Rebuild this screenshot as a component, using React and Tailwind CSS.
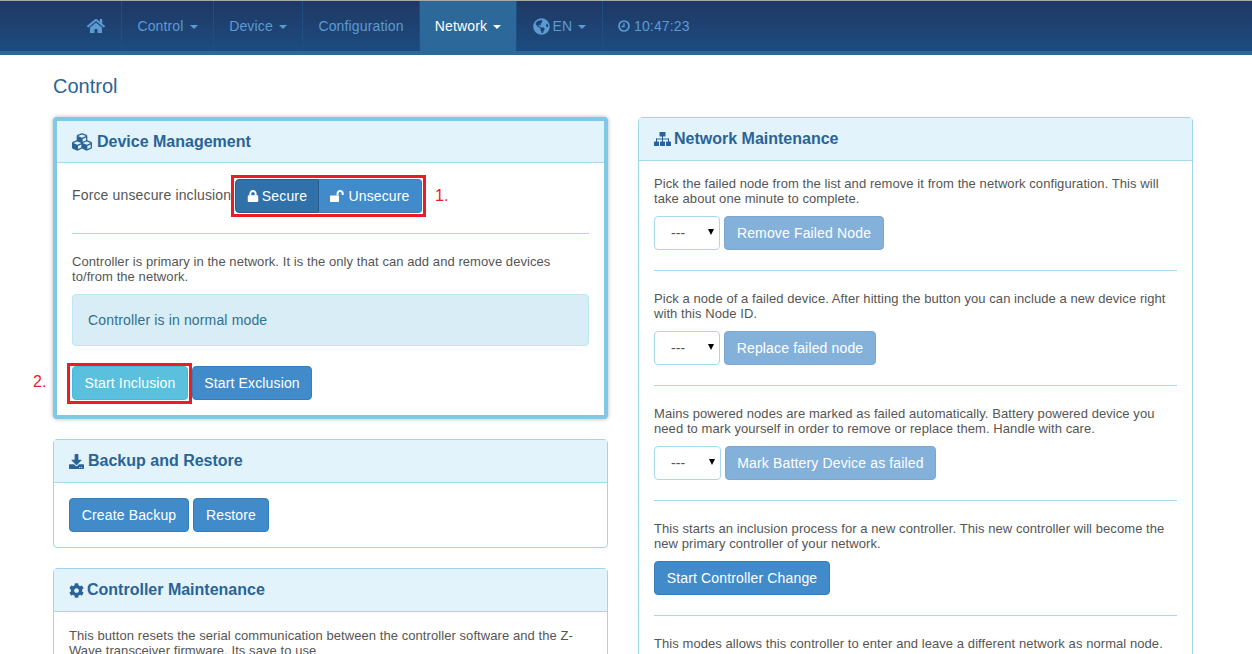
import React from "react";
import { FaHome, FaCubes, FaDownload, FaCog, FaLock, FaGlobeAmericas } from "react-icons/fa";

const Caret = () => <span className="inline-block ml-[2px] align-middle w-0 h-0 border-x-4 border-x-transparent border-t-4 border-t-current" />;

const NavItem = ({ className = "", children, active }) => (
  <div className={`h-full flex items-center justify-center border-r border-[#1f4f80] text-[14px] ${active ? "bg-[#2c6899] text-white" : "text-[#5b9bd1]"} ${className}`}>
    {children}
  </div>
);

const Btn = ({ className = "", children, disabled }) => (
  <div className={`h-[34px] flex items-center justify-center rounded border text-[14px] text-white ${disabled ? "bg-[#84b1da] border-[#7aa8d2]" : "bg-[#428bca] border-[#357ebd]"} ${className}`}>{children}</div>
);

const Panel = ({ icon, title, gap = "gap-[4px]", className = "", children }) => (
  <section className={`bg-white border border-[#9fd6ec] rounded ${className}`}>
    <header className={`h-[43px] px-[15px] flex items-center bg-[#e2f3fb] border-b border-[#a6d9ee] text-[#2a6496] text-[16px] font-bold tracking-normal ${gap}`}>
      {icon}<span>{title}</span>
    </header>
    {children}
  </section>
);

const Select = ({ w }) => (
  <div className={`h-[34px] ${w} rounded border border-[#a6d9ee] flex items-center text-[14px] text-[#555] relative pl-[16px]`}>
    ---
    <span className="absolute right-[5px] top-[12px] w-0 h-0 border-x-[3.5px] border-x-transparent border-t-[6px] border-t-black" />
  </div>
);

const Section = ({ text, children, first, last }) => (
  <div className={`${first ? "pt-[15px]" : "pt-[20px]"} pb-[20px] ${last ? "" : "border-b border-[#a6d9ee]"}`}>
    <p className="text-[13px] leading-[15px] tracking-[0.07px] text-[#555] mb-[10px]">{text}</p>
    <div className="flex gap-[4px]">{children}</div>
  </div>
);

const UnlockIcon = () => (
  <svg width="14" height="12" viewBox="0 0 14 12" fill="currentColor" aria-hidden="true">
    <path d="M1 5.5h7.2c.5 0 .8.3.8.8v4.9c0 .5-.3.8-.8.8H.8c-.5 0-.8-.3-.8-.8V6.500c0-.6.4-1 1-1z" />
    <path d="M6.600 5.500V3.400C6.600 1.500 8.100 0 10.100 0S13.700 1.500 13.700 3.400V5h-2V3.400c0-.8-.7-1.500-1.600-1.500s-1.600.7-1.600 1.500v2.100z" />
  </svg>
);

const SitemapIcon = () => (
  <svg width="17" height="14" viewBox="0 0 17 14" fill="currentColor" aria-hidden="true">
    <rect x="5.500" y="0" width="6" height="4.500" rx="0.600" />
    <rect x="8" y="4" width="1" height="6" />
    <rect x="2" y="6.500" width="13" height="1" />
    <rect x="2" y="6.500" width="1" height="4" />
    <rect x="14" y="6.500" width="1" height="4" />
    <rect x="0" y="9.500" width="5" height="4.500" rx="0.600" />
    <rect x="6" y="9.500" width="5" height="4.500" rx="0.600" />
    <rect x="12" y="9.500" width="5" height="4.500" rx="0.600" />
  </svg>
);

const ClockIcon = () => (
  <svg width="12" height="12" viewBox="0 0 12 12" fill="none" stroke="currentColor" className="mr-[4px]" aria-hidden="true">
    <circle cx="6" cy="6" r="5" strokeWidth="1.700" />
    <path d="M6 3v3.500H3.500" strokeWidth="1.300" />
  </svg>
);

export default function App() {
  return (
    <div className="w-[1252px] h-[654px] overflow-hidden bg-white tracking-[0.15px]" style={{ fontFamily: '"Liberation Sans", Arial, sans-serif' }}>
      <nav className="h-[55px] border-t border-t-[#a9a9a9] border-b-[4px] border-b-[#2c6899] bg-gradient-to-b from-[#1f3864] to-[#1b4c80] flex pl-[72px]">
        <NavItem className="w-[50px]"><FaHome className="text-[18px] text-[#5b9bd1] ml-[-1px]" /></NavItem>
        <NavItem className="w-[92px]"><span>Control <Caret /></span></NavItem>
        <NavItem className="w-[89px]"><span>Device <Caret /></span></NavItem>
        <NavItem className="w-[117px]"><span>Configuration</span></NavItem>
        <NavItem className="w-[97px]" active><span>Network <Caret /></span></NavItem>
        <NavItem className="w-[86px]">
          <FaGlobeAmericas className="text-[17px] mr-[3px] shrink-0" /><span>EN <Caret /></span>
        </NavItem>
        <div className="pl-[15px] flex items-center text-[14px] text-[#5b9bd1]">
          <ClockIcon />10:47:23
        </div>
      </nav>

      <main className="ml-[53px] w-[1140px]">
        <h2 className="text-[20px] leading-[22px] text-[#2a6496] pt-[20px] pb-[21px] tracking-normal">Control</h2>
        <div className="grid grid-cols-[555px_555px] gap-x-[30px] items-start">
          <div className="flex flex-col gap-[20px] -mt-[1px]">
            <section className="bg-white border-[4px] border-[#7fc9e6] rounded shadow-[0_0_4px_rgba(0,0,0,0.3)]">
              <header className="h-[42px] px-[15px] flex items-center gap-[5px] bg-[#e2f3fb] border-b border-[#a6d9ee] text-[#2a6496] text-[16px] font-bold tracking-normal">
                <FaCubes className="text-[20px]" /><span>Device Management</span>
              </header>
              <div className="px-[15px] pt-[12px]">
                <div className="flex items-center">
                  <span className="text-[14px] leading-[20px] text-[#555] w-[159px] pb-[2px] whitespace-nowrap">Force unsecure inclusion</span>
                  <div className="relative flex p-[1px] border-[3px] border-[#ed1c24]">
                    <div className="w-[84px] h-[34px] flex items-center justify-center gap-[3px] rounded-l bg-[#3071a9] border border-[#285e8e] text-white text-[14px]"><FaLock className="text-[12px]" />Secure</div>
                    <div className="w-[103px] h-[34px] flex items-center justify-center gap-[4px] rounded-r bg-[#428bca] border border-[#357ebd] border-l-0 text-white text-[14px]"><UnlockIcon />Unsecure</div>
                    <span className="absolute left-[201px] top-[6px] text-[16px] text-[#ed1c24]">1.</span>
                  </div>
                </div>
                <hr className="border-t border-[#a6d9ee] mt-[16px] mb-[20px]" />
                <p className="text-[13px] leading-[15px] tracking-[0.07px] text-[#555] mb-[10px]">Controller is primary in the network. It is the only that can add and remove devices to/from the network.</p>
                <div className="h-[52px] px-[15px] flex items-center rounded bg-[#d9edf7] border border-[#bce8f1] text-[#31708f] text-[14px]">Controller is in normal mode</div>
                <div className="flex mt-[17px] mb-[11px] -ml-[5px]">
                  <div className="relative border-[3px] border-[#ed1c24] pl-[2px] pr-[1px] pb-[1px]">
                    <Btn className="w-[116px] !bg-[#5bc0de] !border-[#46b8da]">Start Inclusion</Btn>
                    <span className="absolute left-[-37px] top-[4px] text-[16px] text-[#ed1c24]">2.</span>
                  </div>
                  <Btn className="w-[120px] mt-[3px]">Start Exclusion</Btn>
                </div>
              </div>
            </section>

            <Panel icon={<FaDownload className="text-[15px]" />} title="Backup and Restore">
              <div className="p-[15px] flex gap-[4px]">
                <Btn className="w-[120px]">Create Backup</Btn>
                <Btn className="w-[76px]">Restore</Btn>
              </div>
            </Panel>

            <Panel icon={<FaCog className="text-[15px]" />} gap="gap-[3px]" title="Controller Maintenance">
              <div className="px-[15px] pt-[16px]">
                <p className="text-[13px] leading-[15px] tracking-[0.07px] text-[#555]">This button resets the serial communication between the controller software and the Z-Wave transceiver firmware. Its save to use</p>
              </div>
            </Panel>
          </div>

          <Panel icon={<SitemapIcon />} gap="gap-[3px]" title="Network Maintenance" className="-mt-[1px]">
            <div className="px-[15px]">
              <Section first text="Pick the failed node from the list and remove it from the network configuration. This will take about one minute to complete.">
                <Select w="w-[66px]" /><Btn className="w-[160px]" disabled>Remove Failed Node</Btn>
              </Section>
              <Section text="Pick a node of a failed device. After hitting the button you can include a new device right with this Node ID.">
                <Select w="w-[66px]" /><Btn className="w-[152px]" disabled>Replace failed node</Btn>
              </Section>
              <Section text="Mains powered nodes are marked as failed automatically. Battery powered device you need to mark yourself in order to remove or replace them. Handle with care.">
                <Select w="w-[67px]" /><Btn className="w-[211px]" disabled>Mark Battery Device as failed</Btn>
              </Section>
              <Section text="This starts an inclusion process for a new controller. This new controller will become the new primary controller of your network.">
                <Btn className="w-[176px]">Start Controller Change</Btn>
              </Section>
              <Section last text="This modes allows this controller to enter and leave a different network as normal node." />
            </div>
          </Panel>
        </div>
      </main>
    </div>
  );
}
